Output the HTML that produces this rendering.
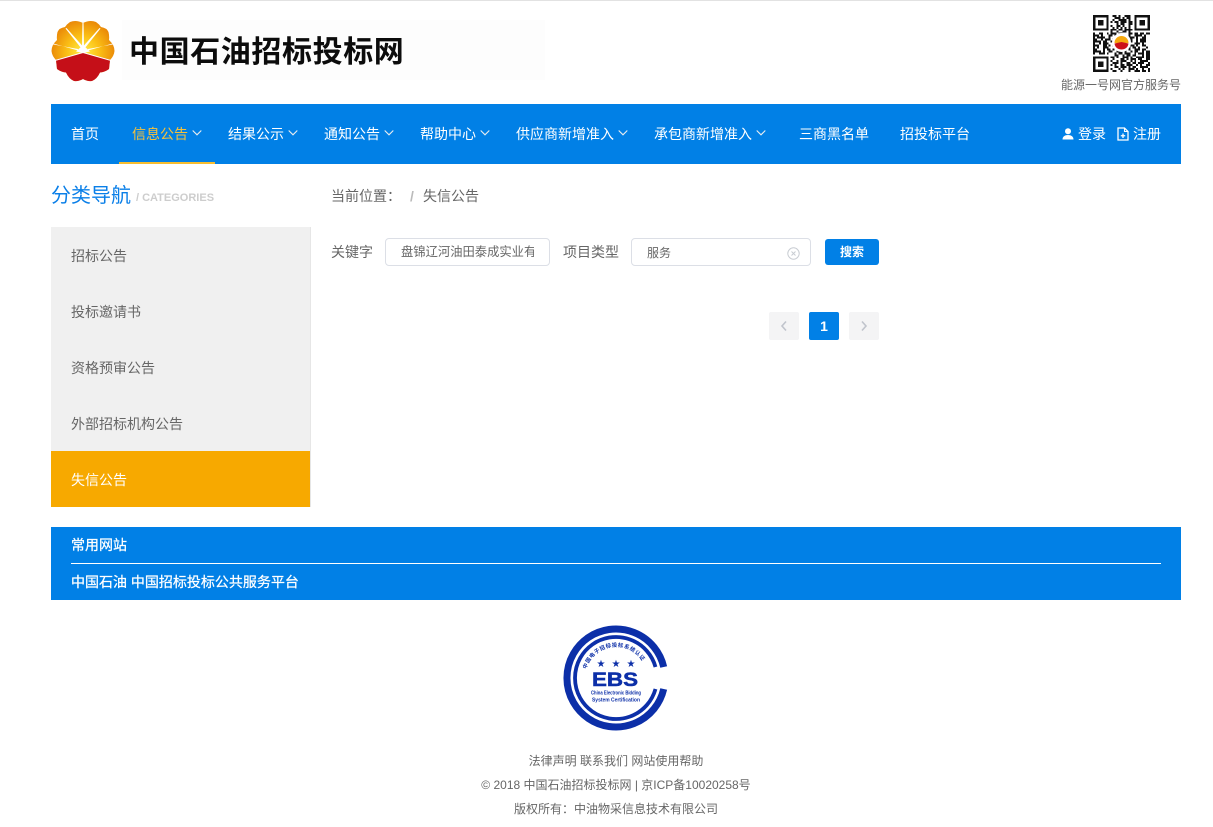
<!DOCTYPE html>
<html lang="zh-CN">
<head>
<meta charset="utf-8">
<title>中国石油招标投标网</title>
<style>
html,body{margin:0;padding:0;background:#fff}
body{width:1213px;height:827px;position:relative;overflow:hidden;font-family:"Liberation Sans","Noto Sans CJK SC",sans-serif;font-size:14px;color:#666}
.a{position:absolute;white-space:nowrap}
.t{position:absolute;white-space:nowrap;line-height:20px}
.n{color:#fff;top:124px}
svg{position:absolute;display:block}
.side{position:absolute;left:51px;width:259px;height:56px;line-height:58px;text-indent:20px;color:#666;background:#f0f0f0}
</style>
</head>
<body>
<div class="a" style="left:0;top:0;width:1213px;height:1px;background:#e2e2e2"></div>

<svg style="left:51px;top:20px" width="64" height="62" viewBox="0 0 64 62">
<defs>
<radialGradient id="g" gradientUnits="userSpaceOnUse" cx="32" cy="32" r="32"><stop offset="0" stop-color="#fff04a"/><stop offset=".5" stop-color="#fbc016"/><stop offset="1" stop-color="#ea8a08"/></radialGradient>
<clipPath id="c"><path d="M32 3Q25 -.5 19 2Q16 4 14 7Q8 8 6.500 12Q5.500 16 6 20Q.5 25 .5 31Q1 36 5 40L6 49Q10 52 15 52.500Q18 59 23 61Q28 61.500 32 59Q36 61.500 41 61Q46 59 49 52.500Q54 52 58 49L59 40Q63 36 63.500 31Q63.500 25 58 20Q58.500 16 57.500 12Q56 8 50 7Q48 4 45 2Q39 -.5 32 3Z"/></clipPath>
</defs>
<g clip-path="url(#c)">
<rect width="64" height="62" fill="url(#g)"/>
<path d="M0 41L32 32.500L64 41V62H0Z" fill="#c50f18"/>
<path d="M4 40.500L32 32.500L60 40.500" fill="none" stroke="#fff" stroke-width="1"/>
<g fill="#fff">
<path d="M31 28L31.500 0H32.500L33 28Z"/>
<path d="M30 28L14.500 8.500L15.500 8L31.500 26Z"/>
<path d="M34 28L49.500 8.500L48.500 8L32.500 26Z"/>
<path d="M27 31.500L0 23.800L0 25L27 30Z" transform="translate(0 -1)"/>
<path d="M37 31.500L64 23.800L64 25L37 30Z" transform="translate(0 -1)"/>
<path d="M25 31.500L32 25L39 31.500L32 33Z"/>
</g>
</g>
</svg>

<div class="a" style="left:122px;top:20px;width:423px;height:60px;background:#fdfdfd"></div>
<div class="t" style="left:129px;top:33px;font-size:30px;line-height:40px;font-weight:700;color:#0c0c0c;letter-spacing:.6px">中国石油招标投标网</div>

<svg style="left:1093px;top:15px;filter:blur(.35px)" width="57" height="57" viewBox="0 0 29 29" shape-rendering="crispEdges">
<g stroke="#111" stroke-width="1" fill="none">
<path d="M0 .5H29" stroke-dasharray="9 1 2 1 1 2 3 1 1 8"/>
<path d="M0 1.5H29" stroke-dasharray="9 2 3 1 1 1 2 2 1 7"/>
<path d="M0 2.5H29" stroke-dasharray="9 1 1 2 4 1 1 1 2 7"/>
<path d="M0 3.5H29" stroke-dasharray="10 1 2 1 3 1 2 1 1 7"/>
<path d="M0 4.5H29" stroke-dasharray="9 3 1 1 2 2 4 7"/>
<path d="M0 5.5H29" stroke-dasharray="10 2 2 1 1 2 1 1 2 7"/>
<path d="M0 6.5H29" stroke-dasharray="9 1 1 1 1 1 1 1 1 1 1 1 1 9"/>
<path d="M0 7.5H29" stroke-dasharray="0 9 3 1 2 1 4 1 1"/>
<path d="M0 8.5H29" stroke-dasharray="2 1 3 1 3 2 1 2 2 1 1 2 1 1 3 2 1"/>
<path d="M0 9.5H29" stroke-dasharray="1 2 2 2 1 1 3 1 2 3 2 1 2 1 2 1 2"/>
<path d="M0 10.5H29" stroke-dasharray="3 1 1 3 2 1 1 2 3 1 1 2 4 1 1 2"/>
<path d="M0 11.5H29" stroke-dasharray="1 1 4 2 1 2 2 1 2 2 3 1 1 2 2 2"/>
<path d="M0 12.5H29" stroke-dasharray="2 2 1 1 3 1 1 3 1 1 1 1 2 2 1 1 3 2"/>
<path d="M0 13.5H29" stroke-dasharray="4 1 2 2 1 1 2 2 2 2 1 2 1 1 3 2"/>
<path d="M0 14.5H29" stroke-dasharray="1 2 1 1 3 2 2 1 3 1 2 2 3 1 1 3"/>
<path d="M0 15.5H29" stroke-dasharray="3 2 2 1 1 1 3 2 1 3 2 1 1 2 2 2"/>
<path d="M0 16.5H29" stroke-dasharray="1 1 1 2 3 3 1 1 2 1 3 1 2 1 1 3 1"/>
<path d="M0 17.5H29" stroke-dasharray="2 3 1 1 2 1 1 2 4 1 1 2 3 1 2 2"/>
<path d="M0 18.5H29" stroke-dasharray="4 1 1 2 2 2 3 1 1 2 1 1 2 2 1 1 2"/>
<path d="M0 19.5H29" stroke-dasharray="1 2 3 1 1 3 1 1 2 1 3 2 1 1 3 1 2"/>
<path d="M0 20.5H29" stroke-dasharray="3 1 1 1 3 2 2 2 1 1 2 1 2 3 1 1 2"/>
<path d="M0 21.5H29" stroke-dasharray="0 9 2 1 1 2 3 1 1 2 4 1 2"/>
<path d="M0 22.5H29" stroke-dasharray="9 1 1 3 2 1 1 1 3 1 2 2 3"/>
<path d="M0 23.5H29" stroke-dasharray="10 2 1 1 3 2 1 1 1 2 4 1"/>
<path d="M0 24.5H29" stroke-dasharray="9 1 3 1 1 2 2 1 2 1 3 2 1"/>
<path d="M0 25.5H29" stroke-dasharray="10 1 1 2 2 1 3 2 1 1 1 2 2"/>
<path d="M0 26.5H29" stroke-dasharray="9 2 2 1 3 1 1 1 2 2 4 1"/>
<path d="M0 27.5H29" stroke-dasharray="10 3 1 1 1 2 3 1 1 2 1 2 1"/>
<path d="M0 28.5H29" stroke-dasharray="9 1 2 2 1 3 1 2 3 1 2 1 1"/>
</g>
<g fill="#fff"><rect x="0" y="0" width="9" height="9"/><rect x="20" y="0" width="9" height="9"/><rect x="0" y="20" width="9" height="9"/></g>
<g fill="none" stroke="#111" stroke-width="1.1"><rect x=".6" y=".6" width="6.800" height="6.800"/><rect x="21.600" y=".6" width="6.800" height="6.800"/><rect x=".6" y="21.600" width="6.800" height="6.800"/></g>
<g fill="#111"><rect x="2.600" y="2.600" width="2.800" height="2.800"/><rect x="23.600" y="2.600" width="2.800" height="2.800"/><rect x="2.600" y="23.600" width="2.800" height="2.800"/></g>
</svg>
<svg style="left:1112px;top:33px" width="19" height="19" viewBox="0 0 19 19">
<circle cx="9.500" cy="9.500" r="9.500" fill="#fff"/>
<path d="M2.500 10A7 7 0 0 1 16.500 10Z" fill="#f6a90f"/>
<path d="M2.500 10.500L9.500 9L16.500 10.500C16 14.500 13 16.500 9.500 16.500C6 16.500 3 14.500 2.500 10.500Z" fill="#cc1018"/>
</svg>
<div class="t" style="left:1061px;top:75px;font-size:12px;color:#666">能源一号网官方服务号</div>

<div class="a" style="left:51px;top:104px;width:1130px;height:60px;background:#0180e6"></div>
<div class="a" style="left:119px;top:162px;width:96px;height:2px;background:#f7bd2f"></div>
<div class="t n" style="left:71px">首页</div>
<div class="t n" style="left:132px;color:#f8c13a">信息公告</div>
<div class="t n" style="left:228px">结果公示</div>
<div class="t n" style="left:324px">通知公告</div>
<div class="t n" style="left:420px">帮助中心</div>
<div class="t n" style="left:516px">供应商新增准入</div>
<div class="t n" style="left:654px">承包商新增准入</div>
<div class="t n" style="left:799px">三商黑名单</div>
<div class="t n" style="left:900px">招投标平台</div>
<svg style="left:192px;top:129px" width="10" height="7" viewBox="0 0 10 7"><path d="M.7 1.500L5 5.800L9.300 1.500" fill="none" stroke="#e9edf0" stroke-width="1.100"/></svg>
<svg style="left:288px;top:129px" width="10" height="7" viewBox="0 0 10 7"><path d="M.7 1.500L5 5.800L9.300 1.500" fill="none" stroke="#e9edf0" stroke-width="1.100"/></svg>
<svg style="left:384px;top:129px" width="10" height="7" viewBox="0 0 10 7"><path d="M.7 1.500L5 5.800L9.300 1.500" fill="none" stroke="#e9edf0" stroke-width="1.100"/></svg>
<svg style="left:480px;top:129px" width="10" height="7" viewBox="0 0 10 7"><path d="M.7 1.500L5 5.800L9.300 1.500" fill="none" stroke="#e9edf0" stroke-width="1.100"/></svg>
<svg style="left:618px;top:129px" width="10" height="7" viewBox="0 0 10 7"><path d="M.7 1.500L5 5.800L9.300 1.500" fill="none" stroke="#e9edf0" stroke-width="1.100"/></svg>
<svg style="left:756px;top:129px" width="10" height="7" viewBox="0 0 10 7"><path d="M.7 1.500L5 5.800L9.300 1.500" fill="none" stroke="#e9edf0" stroke-width="1.100"/></svg>
<svg style="left:1062px;top:128px" width="12" height="12" viewBox="0 0 12 12"><circle cx="6" cy="3.200" r="3" fill="#fff"/><path d="M.5 11.500C.5 8.500 3 7 6 7C9 7 11.500 8.500 11.500 11.500Z" fill="#fff"/></svg>
<div class="t n" style="left:1078px">登录</div>
<svg style="left:1117px;top:127px" width="12" height="14" viewBox="0 0 12 14"><path d="M1 1H7.500L11 4.500V13H1Z" fill="none" stroke="#fff" stroke-width="1.300"/><path d="M7.500 1V4.500H11" fill="none" stroke="#fff" stroke-width="1.100"/><path d="M6 6.500V11M3.800 8.750H8.200" stroke="#fff" stroke-width="1.300"/></svg>
<div class="t n" style="left:1133px">注册</div>

<div class="t" style="left:51px;top:182px;font-size:20px;line-height:28px;color:#0a7fe8">分类导航</div>
<div class="t" style="left:136px;top:188px;font-size:11px;color:#cdcdcd;font-weight:700">/ CATEGORIES</div>
<div class="a" style="left:310px;top:227px;width:1px;height:280px;background:#e6e6e6"></div>
<div class="side" style="top:227px">招标公告</div>
<div class="side" style="top:283px">投标邀请书</div>
<div class="side" style="top:339px">资格预审公告</div>
<div class="side" style="top:395px">外部招标机构公告</div>
<div class="side" style="top:451px;background:#f7a900;color:#fff">失信公告</div>

<div class="t" style="left:331px;top:186px">当前位置：</div>
<div class="t" style="left:410px;top:186px;color:#bbb;font-weight:700">/</div>
<div class="t" style="left:423px;top:186px">失信公告</div>

<div class="t" style="left:331px;top:242px">关键字</div>
<div class="a" style="left:385px;top:238px;width:163px;height:26px;border:1px solid #dcdfe6;border-radius:4px"></div>
<div class="a" style="left:401px;top:242px;width:133px;height:20px;line-height:21px;overflow:hidden;font-size:12.300px;color:#666">盘锦辽河油田泰成实业有限公司</div>
<div class="t" style="left:563px;top:242px">项目类型</div>
<div class="a" style="left:631px;top:238px;width:178px;height:26px;border:1px solid #dcdfe6;border-radius:4px"></div>
<div class="t" style="left:647px;top:243px;font-size:12px;color:#666">服务</div>
<svg style="left:787px;top:247px" width="13" height="13" viewBox="0 0 13 13"><circle cx="6.500" cy="6.500" r="5.700" fill="none" stroke="#c8ccd2" stroke-width="1"/><path d="M4.500 4.500L8.500 8.500M8.500 4.500L4.500 8.500" stroke="#c8ccd2" stroke-width="1"/></svg>
<div class="a" style="left:825px;top:239px;width:54px;height:26px;line-height:27px;text-align:center;background:#0180e6;border-radius:3px;color:#fff;font-size:12px;font-weight:700">搜索</div>

<div class="a" style="left:769px;top:312px;width:30px;height:28px;background:#f4f4f5;border-radius:2px"></div>
<svg style="left:780px;top:320px" width="8" height="12" viewBox="0 0 8 12"><path d="M6 1.500L2 6L6 10.500" fill="none" stroke="#c0c4cc" stroke-width="1.600"/></svg>
<div class="a" style="left:809px;top:312px;width:30px;height:28px;line-height:28px;text-align:center;background:#0180e6;border-radius:2px;color:#fff;font-weight:700;font-size:14px">1</div>
<div class="a" style="left:849px;top:312px;width:30px;height:28px;background:#f4f4f5;border-radius:2px"></div>
<svg style="left:860px;top:320px" width="8" height="12" viewBox="0 0 8 12"><path d="M2 1.500L6 6L2 10.500" fill="none" stroke="#c0c4cc" stroke-width="1.600"/></svg>

<div class="a" style="left:51px;top:527px;width:1130px;height:73px;background:#0180e6"></div>
<div class="a" style="left:71px;top:563px;width:1090px;height:1px;background:#fff"></div>
<div class="t" style="left:71px;top:535px;color:#fff;-webkit-text-stroke:.25px #fff">常用网站</div>
<div class="t" style="left:71px;top:572px;color:#fff;-webkit-text-stroke:.25px #fff">中国石油 中国招标投标公共服务平台</div>

<svg style="left:561px;top:623px" width="110" height="110" viewBox="0 0 110 110">
<defs><path id="arc" d="M25 47A31 31 0 0 1 85 47"/></defs>
<path d="M102.700 44A49 49 0 1 0 102.700 66" fill="none" stroke="#0c2fa8" stroke-width="7"/>
<path d="M94.500 44A41 41 0 1 0 94.500 66" fill="none" stroke="#0c2fa8" stroke-width="3.800"/>
<text font-size="5.400" font-weight="700" fill="#0c2fa8" letter-spacing=".5" font-family="'Noto Sans CJK SC',sans-serif"><textPath href="#arc" startOffset="1">中国电子招标投标系统认证</textPath></text>
<text x="40" y="44" font-size="10" fill="#0c2fa8" text-anchor="middle" font-family="'DejaVu Sans',sans-serif">★</text>
<text x="55" y="44" font-size="10" fill="#0c2fa8" text-anchor="middle" font-family="'DejaVu Sans',sans-serif">★</text>
<text x="70" y="44" font-size="10" fill="#0c2fa8" text-anchor="middle" font-family="'DejaVu Sans',sans-serif">★</text>
<text x="54" y="63" font-size="19" font-weight="700" fill="#0c2fa8" stroke="#0c2fa8" stroke-width=".5" text-anchor="middle" font-family="'Liberation Sans',sans-serif" textLength="46" lengthAdjust="spacingAndGlyphs">EBS</text>
<text x="55" y="71.500" font-size="5" font-weight="700" fill="#0c2fa8" text-anchor="middle" font-family="'Liberation Sans',sans-serif" textLength="50" lengthAdjust="spacingAndGlyphs">China Electronic Bidding</text>
<text x="55" y="78.500" font-size="5" font-weight="700" fill="#0c2fa8" text-anchor="middle" font-family="'Liberation Sans',sans-serif" textLength="48" lengthAdjust="spacingAndGlyphs">System Certification</text>
</svg>

<div class="a" style="left:416px;top:751px;width:400px;line-height:20px;text-align:center;font-size:12px">法律声明 联系我们 网站使用帮助</div>
<div class="a" style="left:416px;top:775px;width:400px;line-height:20px;text-align:center;font-size:12px">© 2018 中国石油招标投标网 | 京ICP备10020258号</div>
<div class="a" style="left:416px;top:799px;width:400px;line-height:20px;text-align:center;font-size:12px">版权所有：中油物采信息技术有限公司</div>
</body>
</html>
